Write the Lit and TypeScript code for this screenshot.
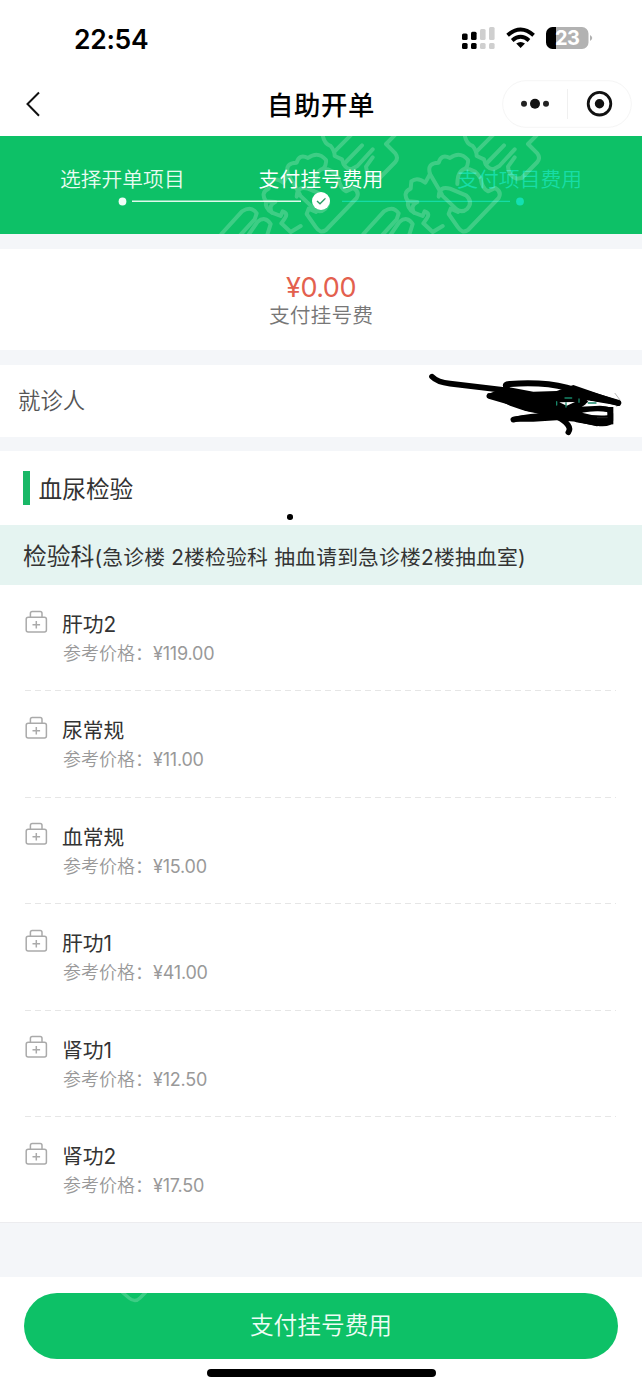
import { LitElement, html, css, svg } from "lit";
import { customElement, property } from "lit/decorators.js";

interface LabItem {
  name: string;
  price: string;
}

const ITEMS: LabItem[] = [
  { name: "肝功2", price: "¥119.00" },
  { name: "尿常规", price: "¥11.00" },
  { name: "血常规", price: "¥15.00" },
  { name: "肝功1", price: "¥41.00" },
  { name: "肾功1", price: "¥12.50" },
  { name: "肾功2", price: "¥17.50" },
];

// One motif of the banner pattern: a hand with a cloud-like cuff.
const motif = svg`
  <path d="M254 2Q258 30 278 36Q290 50 290 66L312 76Q318 104 340 106L358 96L404 46"/>
  <path d="M372 34L318 90M340 2L290 52"/>
  <path d="M404 70L384 98Q386 126 410 134L425 132L472 84Q482 72 472 58L444 30L472 2"/>
  <path d="M185 180L150 120Q140 86 176 86Q184 58 210 72Q240 50 264 78Q266 92 256 104Q286 104 302 134Q306 162 324 172L346 162Q366 174 356 192L264 288Q246 300 234 280L206 240L212 224L234 234"/>
  <path d="M176 188Q178 154 210 164L258 184Q280 204 262 224Q246 238 230 226L186 184"/>
  <path d="M256 104Q232 110 232 150"/>
  <path d="M150 120L136 146Q112 128 94 142L92 164Q66 176 84 202L112 204Q90 214 102 236L128 246L134 232Q152 238 140 254L130 268L158 294L188 276"/>
  <path d="M84 202Q80 222 102 236"/>
  <path d="M-50 300L12 232Q40 214 56 238L50 256L8 302"/>
  <path d="M32 302L58 264Q82 244 98 270L88 302"/>
`;

@customElement("lab-item")
export class LabItemRow extends LitElement {
  @property() name = "";
  @property() price = "";

  static styles = css`
    :host {
      display: flex;
      flex: none;
      box-sizing: border-box;
      height: 106.4px;
      margin: 0 26px 0 25px;
      padding-top: 24px;
    }
    .icon {
      width: 23px;
      height: 24px;
      flex: none;
      margin-top: 0.6px;
      fill: none;
      stroke: #aaa;
      stroke-width: 1.5;
    }
    .info {
      display: flex;
      flex-direction: column;
      margin-left: 14px;
      padding-top: 1px;
    }
    .name {
      font-size: 20.8px;
      line-height: 30px;
      color: #333;
    }
    .price {
      display: flex;
      padding-left: 1px;
      font-size: 18px;
      line-height: 28px;
      color: #999;
      font-weight: 350;
    }
    .label {
      width: 90px;
    }
    .amount {
      font-weight: 400;
      letter-spacing: -0.2px;
    }
  `;

  render() {
    return html`
      <svg class="icon" viewBox="0 0 23 24">
        <rect x="1.2" y="7.2" width="20.2" height="14.8" rx="2" />
        <path d="M5.400 7V3.400Q5.400 1.600 7.200 1.600H15.200Q17 1.600 17 3.400V7M11.300 11V18.600M7.500 14.800H15.100" />
      </svg>
      <div class="info">
        <div class="name">${this.name}</div>
        <div class="price"><span class="label">参考价格：</span><span class="amount">${this.price}</span></div>
      </div>
    `;
  }
}

@customElement("app-root")
export class AppRoot extends LitElement {
  static styles = css`
    :host {
      display: flex;
      flex-direction: column;
      position: relative;
      box-sizing: border-box;
      width: 642px;
      height: 1389px;
      overflow: hidden;
      background: #f4f6f9;
      font-family: Inter, "Noto Sans CJK SC", sans-serif;
      color: #333;
    }
    .status {
      display: flex;
      justify-content: space-between;
      align-items: center;
      height: 76px;
      padding: 0 48px 0 74px;
      background: #fff;
      flex: none;
    }
    .time {
      font-size: 26.5px;
      font-weight: 600;
      color: #000;
      line-height: 76px;
      padding-top: 2px;
      letter-spacing: -0.3px;
    }
    .signals {
      width: 134px;
      height: 30px;
    }
    .battery {
      font: 700 20px Inter, sans-serif;
      fill: #fff;
    }
    .nav {
      display: grid;
      grid-template-columns: 140px 1fr 140px;
      align-items: center;
      height: 60px;
      background: #fff;
      flex: none;
    }
    .back {
      width: 20px;
      height: 30px;
      margin: -5px 0 0 24px;
    }
    .title {
      text-align: center;
      font-size: 26.4px;
      letter-spacing: 0.6px;
      font-weight: 500;
      color: #000;
      line-height: 58px;
      padding-bottom: 2px;
    }
    .capsule {
      width: 130px;
      height: 48px;
      margin-top: -5px;
    }
    .banner {
      display: grid;
      position: relative;
      height: 98px;
      background: #0dc167;
      color: #e8fbf1;
      flex: none;
      align-content: start;
    }
    .steps {
      display: grid;
      grid-template-columns: repeat(3, 1fr);
      width: 596px;
      margin: 29px auto 0;
      text-align: center;
      font-size: 20.8px;
      line-height: 30px;
      font-weight: 350;
    }
    .step.active {
      color: #fff;
    }
    .step.pending {
      color: #17dda6;
    }
    .track {
      width: 642px;
      height: 20px;
      margin-top: -4px;
    }
    .pattern {
      position: absolute;
      inset: 0;
      width: 642px;
      height: 98px;
      fill: none;
      stroke: #fff;
      opacity: 0.2;
      stroke-width: 12;
      stroke-linejoin: round;
      stroke-linecap: round;
    }
    .fee {
      height: 101px;
      margin-top: 15px;
      padding-top: 24px;
      box-sizing: border-box;
      background: #fff;
      text-align: center;
      flex: none;
    }
    .total {
      font-size: 27px;
      line-height: 30px;
      font-weight: 400;
      letter-spacing: -0.5px;
      color: #e3604e;
    }
    .caption {
      font-size: 20.8px;
      line-height: 26px;
      font-weight: 350;
      color: #777;
    }
    .patient {
      display: flex;
      align-items: center;
      height: 72px;
      margin-top: 15px;
      padding: 0 18px 4px;
      box-sizing: border-box;
      background: #fff;
      font-size: 22.4px;
      font-weight: 350;
      color: #555;
      flex: none;
    }
    .section {
      display: flex;
      align-items: center;
      height: 74px;
      margin-top: 14px;
      padding-left: 23px;
      background: #fff;
      font-size: 23.7px;
      flex: none;
    }
    .mark {
      width: 7px;
      height: 34px;
      margin-right: 8.5px;
      background: #19b867;
    }
    .dept {
      display: flex;
      align-items: baseline;
      height: 60px;
      padding-left: 23px;
      background: #e5f4f1;
      font-size: 20.8px;
      line-height: 63px;
      white-space: pre;
      flex: none;
    }
    .place {
      letter-spacing: 0.2px;
    }
    .lead {
      font-size: 23.8px;
    }
    .list {
      display: flex;
      flex-direction: column;
      height: 638px;
      background: #fff;
      border-bottom: 1px solid #ececef;
      box-sizing: border-box;
      flex: none;
    }
    .rule {
      height: 1px;
      flex: none;
      margin: -1px 26px 0 25px;
      background: repeating-linear-gradient(90deg, #e6e6e6 0 6px, transparent 6px 10px);
    }
    .footer {
      display: flex;
      flex-direction: column;
      align-items: center;
      height: 112px;
      margin-top: 54px;
      padding-top: 16px;
      box-sizing: border-box;
      background: #fff;
      flex: none;
    }
    .pay {
      width: 594px;
      height: 66px;
      padding: 0;
      border: 0;
      border-radius: 33px;
      background: #0dc167;
      color: #effcf5;
      font: 350 23.7px/64px Inter, "Noto Sans CJK SC", sans-serif;
      position: relative;
      overflow: hidden;
    }
    .trace {
      position: absolute;
      left: 94px;
      top: 0;
      width: 34px;
      height: 12px;
    }
    .home {
      width: 229px;
      height: 8px;
      margin-top: 10px;
      border-radius: 4px;
      background: #000;
    }
    .scribble {
      position: absolute;
      left: 400px;
      top: 355px;
      width: 242px;
      height: 100px;
      fill: none;
      stroke-linecap: round;
      stroke-linejoin: round;
    }
    .dot {
      position: absolute;
      left: 287px;
      top: 514px;
      width: 5.5px;
      height: 5.5px;
      border-radius: 50%;
      background: #000;
    }
  `;

  render() {
    return html`
      <div class="status">
        <div class="time">22:54</div>
        <svg class="signals" viewBox="0 0 134 30">
          <rect x="2" y="10.5" width="5.6" height="6.6" rx="1.5" />
          <rect x="11" y="8.8" width="5.6" height="8.3" rx="1.5" />
          <rect x="2" y="20" width="5.6" height="6" rx="1.5" />
          <rect x="11" y="20" width="5.6" height="6" rx="1.5" />
          <g fill="#cfcfcf">
            <rect x="20" y="6" width="5.6" height="11" rx="1.5" />
            <rect x="29" y="4" width="5.6" height="13.1" rx="1.5" />
            <rect x="20" y="20" width="5.6" height="6" rx="1.5" />
            <rect x="29" y="20" width="5.6" height="6" rx="1.5" />
          </g>
          <g fill="none" stroke="#000" stroke-width="3.9">
            <path d="M47.6 12.2Q60.6 0.8 73.6 12.2" />
            <path d="M52.2 17.4Q60.6 10.2 69 17.4" />
          </g>
          <path d="M60.6 25L56.2 20.6Q60.6 17.2 65 20.6Z" />
          <path d="M92 4H122.500A6.500 6.500 0 0 1 129 10.500V19.500A6.500 6.500 0 0 1 122.500 26H92Z" fill="#b2b2b2" transform="translate(-.5 0)" />
          <path d="M96 4H92.500A6.500 6.500 0 0 0 86 10.500V19.500A6.500 6.500 0 0 0 92.500 26H96Z" />
          <path d="M130 12Q134.500 15 130 18Z" fill="#b2b2b2" />
          <text class="battery" x="95" y="22.300" textLength="25">23</text>
        </svg>
      </div>
      <div class="nav">
        <svg class="back" viewBox="0 0 20 30" fill="none" stroke="#111" stroke-width="2">
          <path d="M15 3.500L3.500 15L15 26.800" />
        </svg>
        <div class="title">自助开单</div>
        <svg class="capsule" viewBox="0 0 130 48">
          <rect x=".7" y=".7" width="128.600" height="46.600" rx="23.300" fill="none" stroke="#f5f5f5" />
          <path d="M65.500 9V39" stroke="#f0f0f0" />
          <circle cx="22" cy="23.700" r="3" fill="#222" />
          <circle cx="33" cy="23.700" r="5" fill="#111" />
          <circle cx="44" cy="23.700" r="3" fill="#222" />
          <circle cx="97.500" cy="23.700" r="11.300" fill="none" stroke="#111" stroke-width="2.800" />
          <circle cx="97.500" cy="23.700" r="4.700" fill="#111" />
        </svg>
      </div>
      <div class="banner">
        <div class="steps">
          <div class="step">选择开单项目</div>
          <div class="step active">支付挂号费用</div>
          <div class="step pending">支付项目费用</div>
        </div>
        <svg class="pattern" viewBox="0 0 642 98">
          <g transform="translate(380 -2) scale(.33333)">${motif}</g>
          <g transform="translate(238 -2) scale(.33333)">${motif}</g>
        </svg>
        <svg class="track" viewBox="0 0 642 20">
          <path d="M132 10.300H301" stroke="#e0f9ec" stroke-width="1.600" />
          <path d="M342 10.300H510" stroke="#15dca6" stroke-width="1.300" />
          <circle cx="122.500" cy="10.500" r="3.900" fill="#effdf6" />
          <circle cx="520" cy="10.500" r="3.900" fill="#14dfb2" />
          <circle cx="321" cy="10" r="9" fill="#fff" />
          <path d="M317 10L320 12.800L325.500 7.300" fill="none" stroke="#299b65" stroke-width="1.300" />
        </svg>
      </div>
      <div class="fee">
        <div class="total">¥0.00</div>
        <div class="caption">支付挂号费</div>
      </div>
      <div class="patient">就诊人</div>
      <div class="section"><span class="mark"></span>血尿检验</div>
      <div class="dept"><span class="lead">检验科</span><span class="place">(急诊楼 2楼检验科 抽血请到急诊楼2楼抽血室)</span></div>
      <div class="list">
        ${ITEMS.map(
          (item, i) => html`
            <lab-item .name=${item.name} .price=${item.price}></lab-item>
            ${i < ITEMS.length - 1 ? html`<div class="rule"></div>` : ""}
          `
        )}
      </div>
      <div class="footer">
        <button class="pay">
          <svg class="trace" viewBox="0 0 34 12" fill="none" stroke="#fff" stroke-opacity=".2" stroke-width="3.500">
            <path d="M4 -1L11 5Q17 10 22 5L28 -1" />
          </svg>
          支付挂号费用
        </button>
        <div class="home"></div>
      </div>
      <svg class="scribble" viewBox="0 0 726 300">
        <path d="M645 115L660 135L650 155" stroke="#bbb" stroke-width="3" />
        <g fill="#000">
          <path d="M262 118L320 95L400 110L470 108L520 90L600 118L660 138V152L560 136L566 142L545 156L640 156V208L590 214L530 200L470 196L400 200L340 200L336 186L400 176L330 152Z" />
        </g>
        <path d="M380 104L395 99L445 103L462 108Z" fill="#fff" />
        <path d="M382 182L340 162L428 178Z" fill="#fff" />
        <path d="M546 173Q590 166 622 171V181Q580 184 546 173Z" fill="#fff" />
        <path d="M568 137L625 149L566 153L556 148Z" fill="#fff" />
        <path d="M478 142L525 141L500 152Z" fill="#fff" />
        <path d="M495 129H515M470 140V150M498 143V156M537 132V142M565 144H588" stroke="#178568" stroke-width="4" />
        <g stroke="#000" stroke-width="17">
          <path d="M96 65Q112 82 150 86L320 106" />
          <path d="M320 98Q312 86 330 87Q430 80 500 98L655 144" stroke-width="18" />
          <path d="M268 123L360 150L470 184Q520 212 505 232" />
          <path d="M340 194Q380 184 470 180" />
          <path d="M540 163L600 160Q632 160 632 176V196Q630 208 600 206L530 194" stroke-width="15" />
        </g>
        <path d="M592 188H622" stroke="#333" stroke-width="2" />
      </svg>
      <span class="dot"></span>
    `;
  }
}
